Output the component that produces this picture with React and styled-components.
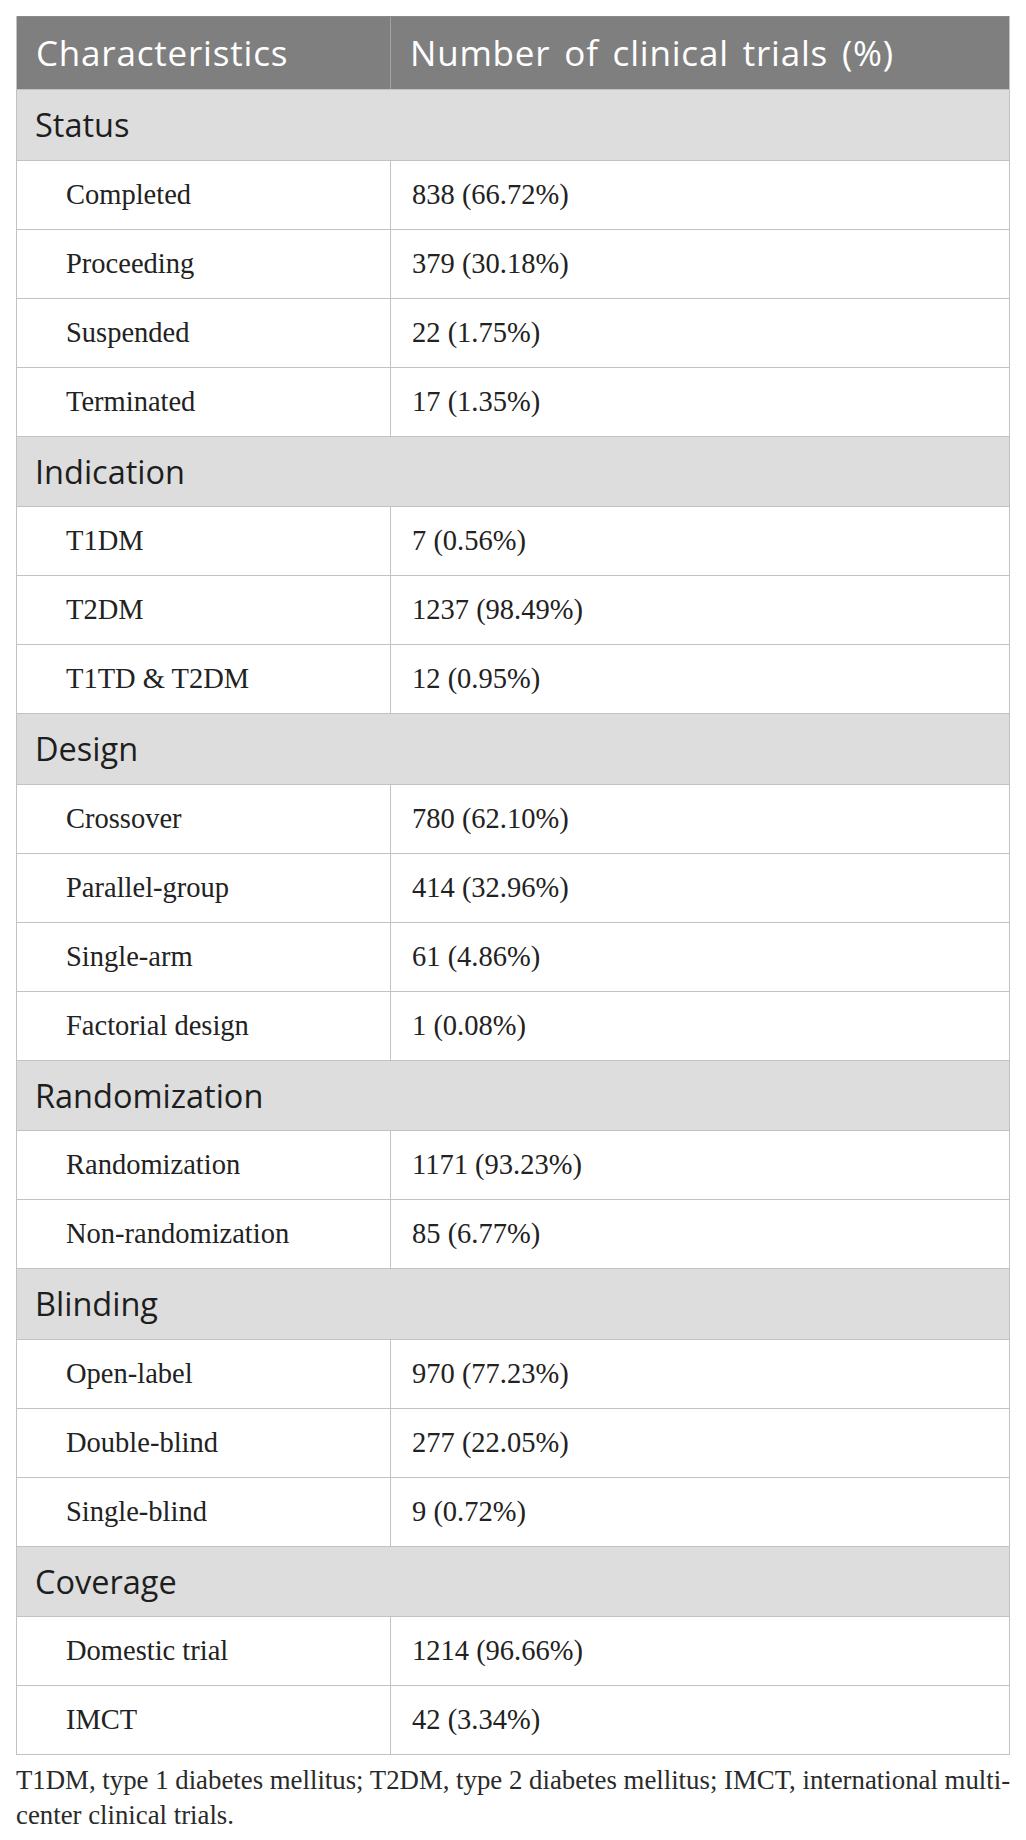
import React from 'react';
import styled, { createGlobalStyle } from 'styled-components';

const GlobalStyle = createGlobalStyle`
    * { box-sizing: border-box; }
    body {
        margin: 0;
        background: #fff;
    }
`;

const Page = styled.div`
    padding: 16px 16px 0;
    width: 1026px;
`;

const Table = styled.div`
    width: 994px;
    border: 1px solid #c2c2c2;
    border-top: none;
`;

const Row = styled.div`
    display: grid;
    grid-template-columns: 373px 1fr;
    border-top: 1px solid #c2c2c2;
    height: 69px;
`;

const HeadRow = styled(Row)`
    background: #7f7f7f;
    border-top-color: #8a8a8a;
    height: 73px;
`;

// section rows span the whole width, light grey band
const SectionRow = styled(Row)`
    grid-template-columns: 1fr;
    background: #dddddd;
    height: 70.5px;
`;

const Cell = styled.div`
    display: flex;
    align-items: center;
    padding-left: ${p => p.$indent ? '49px' : '21px'};
    font-family: "Liberation Serif", "Times New Roman", serif;
    font-size: 28.5px;
    color: #222;
    white-space: nowrap;
    & + & {
        border-left: 1px solid #c2c2c2;
    }
`;

const HeadCell = styled(Cell)`
    font-family: "Open Sans", Lato, sans-serif;
    font-size: 35px;
    letter-spacing: 0.8px;
    word-spacing: 4px;
    color: #fff;
    padding-left: 19px;
    padding-bottom: 2px;
    & + & {
        border-left-color: #a3a3a3;
    }
`;

const SectionCell = styled(Cell)`
    font-family: "Open Sans", Lato, sans-serif;
    font-size: 32.5px;
    color: #1e1e1e;
    padding-left: 18px;
`;

const Note = styled.p`
    margin: 8px 0 0;
    font-family: "Liberation Serif", "Times New Roman", serif;
    font-size: 26.8px;
    line-height: 35px;
    color: #2a2a2a;
    white-space: nowrap;
`;

const sections = [
    { title: 'Status', rows: [
        ['Completed', '838 (66.72%)'],
        ['Proceeding', '379 (30.18%)'],
        ['Suspended', '22 (1.75%)'],
        ['Terminated', '17 (1.35%)'],
    ]},
    { title: 'Indication', rows: [
        ['T1DM', '7 (0.56%)'],
        ['T2DM', '1237 (98.49%)'],
        ['T1TD & T2DM', '12 (0.95%)'],
    ]},
    { title: 'Design', rows: [
        ['Crossover', '780 (62.10%)'],
        ['Parallel-group', '414 (32.96%)'],
        ['Single-arm', '61 (4.86%)'],
        ['Factorial design', '1 (0.08%)'],
    ]},
    { title: 'Randomization', rows: [
        ['Randomization', '1171 (93.23%)'],
        ['Non-randomization', '85 (6.77%)'],
    ]},
    { title: 'Blinding', rows: [
        ['Open-label', '970 (77.23%)'],
        ['Double-blind', '277 (22.05%)'],
        ['Single-blind', '9 (0.72%)'],
    ]},
    { title: 'Coverage', rows: [
        ['Domestic trial', '1214 (96.66%)'],
        ['IMCT', '42 (3.34%)'],
    ]},
];

export default function App() {
    return (
        <Page>
            <GlobalStyle />
            <Table>
                <HeadRow>
                    <HeadCell>Characteristics</HeadCell>
                    <HeadCell>Number of clinical trials (%)</HeadCell>
                </HeadRow>
                {sections.map(s => (
                    <React.Fragment key={s.title}>
                        <SectionRow>
                            <SectionCell>{s.title}</SectionCell>
                        </SectionRow>
                        {s.rows.map(([label, value]) => (
                            <Row key={label}>
                                <Cell $indent>{label}</Cell>
                                <Cell>{value}</Cell>
                            </Row>
                        ))}
                    </React.Fragment>
                ))}
            </Table>
            <Note>
                T1DM, type 1 diabetes mellitus; T2DM, type 2 diabetes mellitus; IMCT, international multi-<br />
                center clinical trials.
            </Note>
        </Page>
    );
}
